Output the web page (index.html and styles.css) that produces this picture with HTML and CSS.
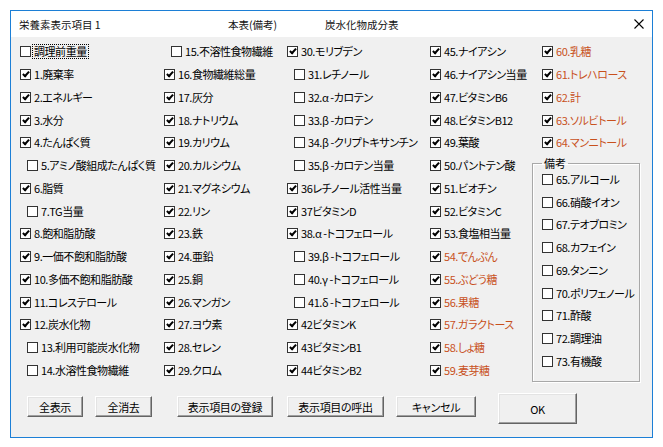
FILE: index.html
```html
<!DOCTYPE html>
<html lang="ja">
<head>
<meta charset="utf-8">
<title>栄養素表示項目</title>
<link rel="stylesheet" href="styles.css">
</head>
<body>
<div class="dialog">
  <div class="titlebar">
    <span class="t1">栄養素表示項目 1</span>
    <span class="t2">本表(備考)</span>
    <span class="t3">炭水化物成分表</span>
    <svg class="close" width="10" height="10" viewBox="0 0 10 10"><path d="M0.5 0.5L9.5 9.5M9.5 0.5L0.5 9.5" stroke="#000" stroke-width="1.1" fill="none"/></svg>
  </div>
  <div class="content">
    <div class="cols">
      <div class="col c1">
        <div class="row"><span class="cb"></span><span class="focus">調理前重量</span></div>
        <div class="row"><span class="cb on"></span>1.廃棄率</div>
        <div class="row"><span class="cb on"></span>2.エネルギー</div>
        <div class="row"><span class="cb on"></span>3.水分</div>
        <div class="row"><span class="cb on"></span>4.たんぱく質</div>
        <div class="row ind"><span class="cb"></span>5.アミノ酸組成たんぱく質</div>
        <div class="row"><span class="cb on"></span>6.脂質</div>
        <div class="row ind"><span class="cb"></span>7.TG当量</div>
        <div class="row"><span class="cb on"></span>8.飽和脂肪酸</div>
        <div class="row"><span class="cb on"></span>9.一価不飽和脂肪酸</div>
        <div class="row"><span class="cb on"></span>10.多価不飽和脂肪酸</div>
        <div class="row"><span class="cb on"></span>11.コレステロール</div>
        <div class="row"><span class="cb on"></span>12.炭水化物</div>
        <div class="row ind"><span class="cb"></span>13.利用可能炭水化物</div>
        <div class="row ind"><span class="cb"></span>14.水溶性食物繊維</div>
      </div>
      <div class="col c2">
        <div class="row ind"><span class="cb"></span>15.不溶性食物繊維</div>
        <div class="row"><span class="cb on"></span>16.食物繊維総量</div>
        <div class="row"><span class="cb on"></span>17.灰分</div>
        <div class="row"><span class="cb on"></span>18.ナトリウム</div>
        <div class="row"><span class="cb on"></span>19.カリウム</div>
        <div class="row"><span class="cb on"></span>20.カルシウム</div>
        <div class="row"><span class="cb on"></span>21.マグネシウム</div>
        <div class="row"><span class="cb on"></span>22.リン</div>
        <div class="row"><span class="cb on"></span>23.鉄</div>
        <div class="row"><span class="cb on"></span>24.亜鉛</div>
        <div class="row"><span class="cb on"></span>25.銅</div>
        <div class="row"><span class="cb on"></span>26.マンガン</div>
        <div class="row"><span class="cb on"></span>27.ヨウ素</div>
        <div class="row"><span class="cb on"></span>28.セレン</div>
        <div class="row"><span class="cb on"></span>29.クロム</div>
      </div>
      <div class="col c3">
        <div class="row"><span class="cb on"></span>30.モリブデン</div>
        <div class="row ind"><span class="cb"></span>31.レチノール</div>
        <div class="row ind"><span class="cb"></span>32.α -カロテン</div>
        <div class="row ind"><span class="cb"></span>33.β -カロテン</div>
        <div class="row ind"><span class="cb"></span>34.β -クリプトキサンチン</div>
        <div class="row ind"><span class="cb"></span>35.β -カロテン当量</div>
        <div class="row"><span class="cb on"></span>36レチノール活性当量</div>
        <div class="row"><span class="cb on"></span>37ビタミンD</div>
        <div class="row"><span class="cb on"></span>38.α -トコフェロール</div>
        <div class="row ind"><span class="cb"></span>39.β -トコフェロール</div>
        <div class="row ind"><span class="cb"></span>40.γ -トコフェロール</div>
        <div class="row ind"><span class="cb"></span>41.δ -トコフェロール</div>
        <div class="row"><span class="cb on"></span>42ビタミンK</div>
        <div class="row"><span class="cb on"></span>43ビタミンB1</div>
        <div class="row"><span class="cb on"></span>44ビタミンB2</div>
      </div>
      <div class="col c4">
        <div class="row"><span class="cb on"></span>45.ナイアシン</div>
        <div class="row"><span class="cb on"></span>46.ナイアシン当量</div>
        <div class="row"><span class="cb on"></span>47.ビタミンB6</div>
        <div class="row"><span class="cb on"></span>48.ビタミンB12</div>
        <div class="row"><span class="cb on"></span>49.葉酸</div>
        <div class="row"><span class="cb on"></span>50.パントテン酸</div>
        <div class="row"><span class="cb on"></span>51.ビオチン</div>
        <div class="row"><span class="cb on"></span>52.ビタミンC</div>
        <div class="row"><span class="cb on"></span>53.食塩相当量</div>
        <div class="row red"><span class="cb on"></span>54.でんぷん</div>
        <div class="row red"><span class="cb on"></span>55.ぶどう糖</div>
        <div class="row red"><span class="cb on"></span>56.果糖</div>
        <div class="row red"><span class="cb on"></span>57.ガラクトース</div>
        <div class="row red"><span class="cb on"></span>58.しょ糖</div>
        <div class="row red"><span class="cb on"></span>59.麦芽糖</div>
      </div>
      <div class="col c5">
        <div class="row red"><span class="cb on"></span>60.乳糖</div>
        <div class="row red"><span class="cb on"></span>61.トレハロース</div>
        <div class="row red"><span class="cb on"></span>62.計</div>
        <div class="row red"><span class="cb on"></span>63.ソルビトール</div>
        <div class="row red"><span class="cb on"></span>64.マンニトール</div>
        <fieldset class="group">
          <legend>備考</legend>
          <div class="row"><span class="cb"></span>65.アルコール</div>
          <div class="row"><span class="cb"></span>66.硝酸イオン</div>
          <div class="row"><span class="cb"></span>67.テオブロミン</div>
          <div class="row"><span class="cb"></span>68.カフェイン</div>
          <div class="row"><span class="cb"></span>69.タンニン</div>
          <div class="row"><span class="cb"></span>70.ポリフェノール</div>
          <div class="row"><span class="cb"></span>71.酢酸</div>
          <div class="row"><span class="cb"></span>72.調理油</div>
          <div class="row"><span class="cb"></span>73.有機酸</div>
        </fieldset>
      </div>
    </div>
    <div class="btns">
      <button class="btn b1">全表示</button>
      <button class="btn b2">全消去</button>
      <button class="btn b3">表示項目の登録</button>
      <button class="btn b4">表示項目の呼出</button>
      <button class="btn b5">キャンセル</button>
      <button class="btn ok">OK</button>
    </div>
  </div>
</div>
</body>
</html>
```
FILE: styles.css
```css
html, body {
  margin: 0;
  padding: 0;
  background: #fff;
}
body {
  font-family: "Noto Sans CJK JP", "Noto Sans", sans-serif;
  color: #000;
  font-feature-settings: "palt" 1;
}
.dialog {
  margin: 10px 0 0 10px;
  width: 641px;
  height: 426px;
  border: 1px solid #1c7fd6;
  background: #f0f0f0;
  display: flex;
  flex-direction: column;
}
.titlebar {
  height: 26px;
  background: #fff;
  display: flex;
  align-items: center;
  padding-left: 8px;
  font-size: 10.5px;
  color: #111;
}
.t1 { width: 209px; }
.t2 { width: 97px; }
.t3 { flex: 1; }
.close { margin-right: 8px; flex: none; }
.content {
  flex: 1;
  display: flex;
  flex-direction: column;
}
.cols {
  display: flex;
  padding: 3.5px 0 0 9px;
}
.col {
  display: flex;
  flex-direction: column;
  flex: none;
}
.c1 { width: 144px; }
.c2 { width: 123px; }
.c3 { width: 143px; }
.c4 { width: 102px; }
.c5 { width: 108px; }
.c5 > .row { padding-left: 10px; }
.row {
  height: 22.75px;
  display: flex;
  align-items: center;
  font-size: 11px;
  line-height: 13px;
  letter-spacing: -0.45px;
  white-space: nowrap;
}
.row.ind { padding-left: 7px; }
.red { color: #c8501c; }
.cb {
  width: 11px;
  height: 11px;
  box-sizing: border-box;
  border: 1px solid #333;
  background: #fff;
  margin-right: 3px;
  position: relative;
  flex: none;
}
.cb.on::after {
  content: "";
  position: absolute;
  left: 2.5px;
  top: 0px;
  width: 2px;
  height: 5px;
  border: solid #000;
  border-width: 0 2px 2px 0;
  transform: rotate(42deg);
}
.focus {
  outline: 1px dotted #000;
  padding: 0 1px;
  margin-left: -1px;
}
.group {
  margin: 3.75px 0 0 0;
  padding: 0 0 8px 9px;
  width: 108px;
  min-width: 0;
  box-sizing: border-box;
  border: 1px solid #a8a8a8;
  box-shadow: inset 1px 1px 0 #fff, 1px 1px 0 #fff;
}
.group legend {
  font-size: 11px;
  line-height: 10px;
  padding: 0 2px;
}
.btns {
  display: flex;
  align-items: flex-start;
  padding-left: 16px;
  margin-top: 11.25px;
}
.btn {
  font-family: "Noto Sans CJK JP", "Noto Sans", sans-serif;
  font-feature-settings: "palt" 1;
  font-size: 11px;
  letter-spacing: -0.3px;
  color: #000;
  height: 21px;
  margin-top: 3px;
  padding: 0;
  box-sizing: border-box;
  background: #f0f0f0;
  border: 1px solid;
  border-color: #fff #646464 #646464 #fff;
  box-shadow: inset -1px -1px 0 #a0a0a0, inset 1px 1px 0 #e3e3e3;
  flex: none;
}
.b1 { width: 56px; }
.b2 { width: 57px; margin-left: 12px; }
.b3 { width: 96px; margin-left: 25px; }
.b4 { width: 97px; margin-left: 14px; }
.b5 { width: 80px; margin-left: 12px; }
.ok { width: 79px; margin-left: 22px; height: 31px; margin-top: 0; }
```
